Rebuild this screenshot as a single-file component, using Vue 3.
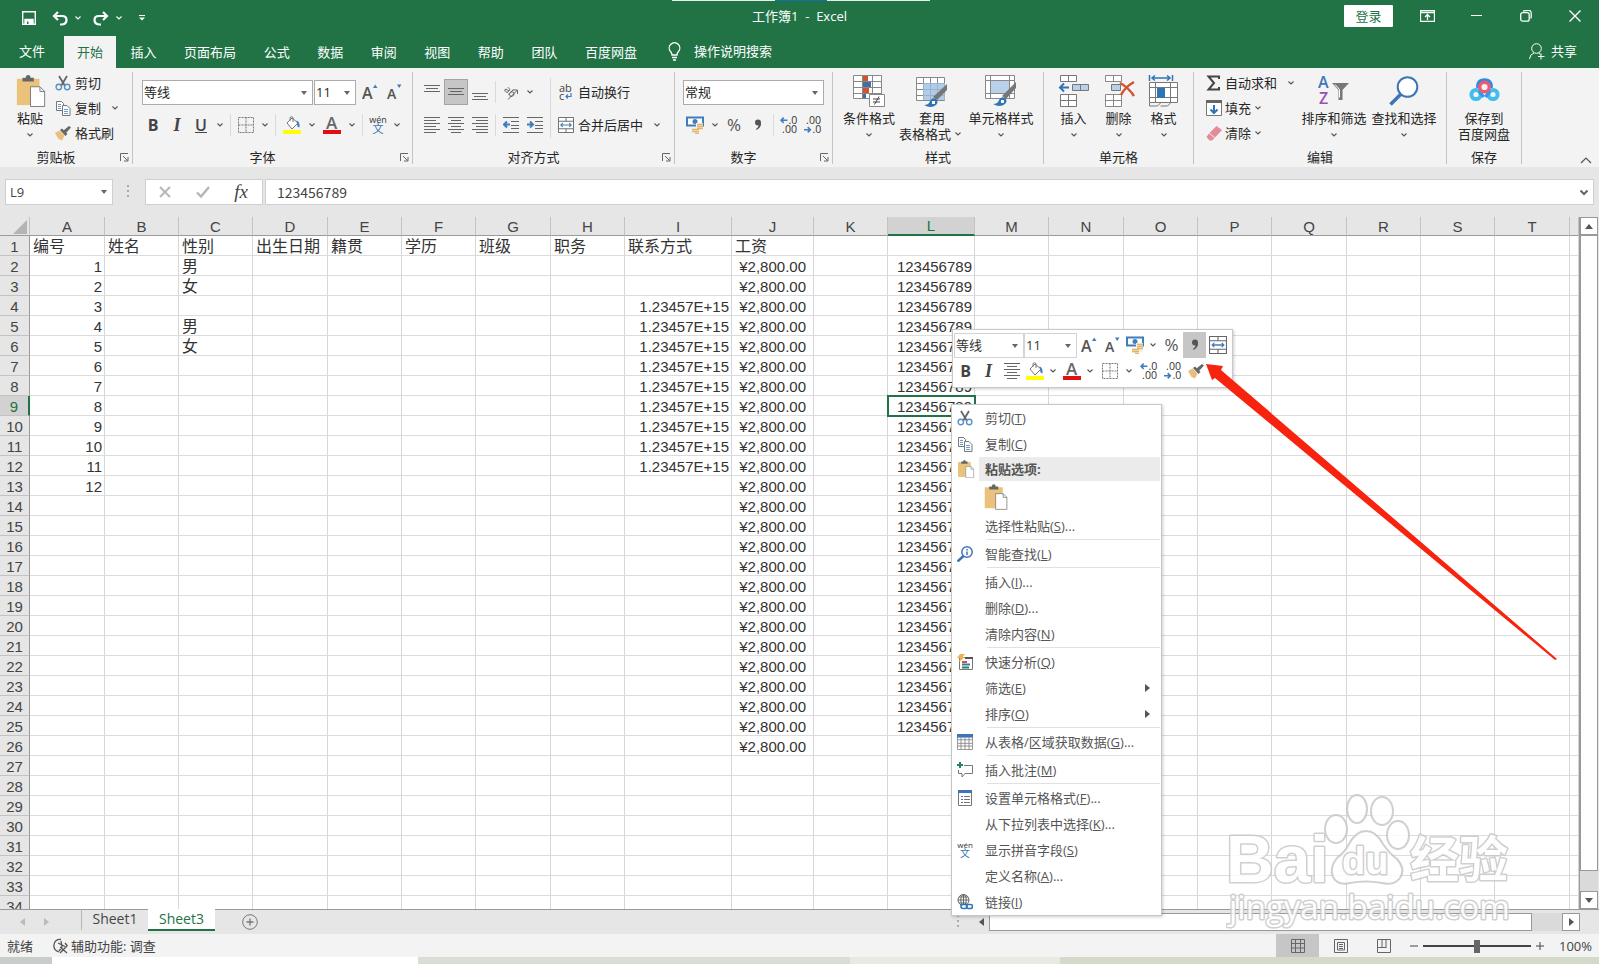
<template>
  <div class="app">
    <svg class="defs" aria-hidden="true">
      <symbol id="i-chev" viewBox="0 0 8 8"><path d="M1.5 2.5 4 5l2.5-2.5" fill="none" stroke="currentColor" stroke-width="1.1" /></symbol>
      <symbol id="i-cut" viewBox="0 0 16 16">
        <path d="M4 1l6 10M12 1L6 11" stroke="#666" stroke-width="1.8" fill="none" />
        <circle cx="3.8" cy="12" r="2.7" fill="none" stroke="#5b8fc7" stroke-width="1.4" />
        <circle cx="12.2" cy="12" r="2.7" fill="none" stroke="#5b8fc7" stroke-width="1.4" />
      </symbol>
      <symbol id="i-copy" viewBox="0 0 16 16">
        <path d="M1.500 1.500h5l2 2v7h-7z" fill="#fff" stroke="#777" />
        <path d="M7.500 5.500h4.500l3 3v7h-7.500z" fill="#fff" stroke="#777" />
        <path d="M3 4.500h3M3 6.500h3M3 8.500h3M9 9.500h4M9 11.500h4M9 13.500h4" stroke="#6a9bd0" />
      </symbol>
      <symbol id="i-brush" viewBox="0 0 16 16">
        <path d="M0 8l4.500-2.500 5 5L7 15.500 3.500 14z" fill="#eabf7d" />
        <path d="M5 5l2-1.500 5.500 5.500-2 2z" fill="#666" />
        <path d="M8.500 5.500L14 1l2 1.500L11 8z" fill="#666" />
      </symbol>
      <symbol id="i-paste" viewBox="0 0 32 34">
        <path d="M1 4h24v28H1z" fill="#eac27c" />
        <path d="M7 3h3.500q0-3 2.500-3t2.500 3H19v4H7z" fill="#666" />
        <path d="M15.500 12.500h10l5 5v16h-15z" fill="#fff" stroke="#777" />
        <path d="M25.500 12.500v5h5" fill="none" stroke="#777" />
      </symbol>
      <symbol id="i-grow" viewBox="0 0 16 16"><text x="0" y="15" font-size="16" font-weight="600" font-family="Open Sans" fill="#555">A</text><path d="M11 4l2.200-3.500L15.500 4z" fill="#3f7dbd" /></symbol>
      <symbol id="i-shrink" viewBox="0 0 16 16"><text x="1" y="15" font-size="14" font-weight="600" font-family="Open Sans" fill="#555">A</text><path d="M11 0.500l2.200 3.500L15.500 0.500z" fill="#3f7dbd" /></symbol>
      <symbol id="i-border" viewBox="0 0 16 16"><path d="M.5.5h15v15H.5zM8 .5v15M.5 8h15" fill="none" stroke="#777" stroke-dasharray="2 1" /></symbol>
      <symbol id="i-bucket" viewBox="0 0 18 18">
        <path d="M4 7l5-5 6 5-6 6z" fill="#fff" stroke="#777" />
        <path d="M7 5V1.500q1.500-1.500 3 0V6" fill="none" stroke="#777" />
        <path d="M13.500 4.500q3.500 1 3 7l-2-1z" fill="#3f7dbd" />
        <path d="M0 14h18v4H0z" fill="#ff0" />
      </symbol>
      <symbol id="i-color" viewBox="0 0 18 18"><text x="3" y="13" font-size="17" font-weight="600" font-family="Open Sans" fill="#666">A</text><path d="M0 14h18v4H0z" fill="#e01010" /></symbol>
      <symbol id="i-wen" viewBox="0 0 18 18"><text x="9" y="7" text-anchor="middle" font-size="9" font-family="Open Sans" fill="#333">wén</text><text x="9" y="17" text-anchor="middle" font-size="11" font-family="Noto Sans CJK SC" fill="#2f75b5">文</text></symbol>
      <symbol id="i-top" viewBox="0 0 16 16"><path d="M0 1.500h16M2 4.500h12M0 7.500h16" stroke="#666" /></symbol>
      <symbol id="i-mid" viewBox="0 0 16 16"><path d="M0 4.500h16M2 7.500h12M0 10.500h16" stroke="#666" /></symbol>
      <symbol id="i-bot" viewBox="0 0 16 16"><path d="M0 9.500h16M2 12.500h12M0 15.500h16" stroke="#666" /></symbol>
      <symbol id="i-left" viewBox="0 0 16 16"><path d="M0 .5h16M0 3.500h12M0 6.500h16M0 9.500h12M0 12.500h16M0 15.500h12" stroke="#666" /></symbol>
      <symbol id="i-center" viewBox="0 0 16 16"><path d="M0 .5h16M3 3.500h10M0 6.500h16M3 9.500h10M0 12.500h16M3 15.500h10" stroke="#666" /></symbol>
      <symbol id="i-right" viewBox="0 0 16 16"><path d="M0 .5h16M4 3.500h12M0 6.500h16M4 9.500h12M0 12.500h16M4 15.500h12" stroke="#666" /></symbol>
      <symbol id="i-outdent" viewBox="0 0 16 16"><path d="M0 .5h16M8 4.500h8M8 8.500h8M8 11.500h8M0 15.500h16" stroke="#666" /><path d="M7 7.500H1M4 4.500l-3 3 3 3" fill="none" stroke="#3f7dbd" stroke-width="2" /></symbol>
      <symbol id="i-indent" viewBox="0 0 16 16"><path d="M0 .5h16M8 4.500h8M8 8.500h8M8 11.500h8M0 15.500h16" stroke="#666" /><path d="M0 7.500h6M3 4.500l3 3-3 3" fill="none" stroke="#3f7dbd" stroke-width="2" /></symbol>
      <symbol id="i-orient" viewBox="0 0 16 16"><text x="0" y="9" font-size="10" font-family="Open Sans" fill="#555" transform="rotate(45 4 8)">ab</text><path d="M5 15.500L14.500 6M10.500 6h4v4" fill="none" stroke="#666" /></symbol>
      <symbol id="i-wrap" viewBox="0 0 16 16"><text x="1" y="8" font-size="11" font-family="Open Sans" fill="#444">ab</text><text x="1" y="16" font-size="11" font-family="Open Sans" fill="#444">c</text><path d="M13 9v3.500H8M10 10.500l-2 2 2 2" fill="none" stroke="#3f7dbd" stroke-width="1.2" /></symbol>
      <symbol id="i-merge" viewBox="0 0 17 17"><path d="M.5.5h16v16H.5zM.5 4.500h16M.5 12.500h16M8.500.5v4M8.500 12.500v4" fill="#fff" stroke="#666" /><path d="M3 8.500h11M5 6.500l-2 2 2 2M12 6.500l2 2-2 2" fill="none" stroke="#3f7dbd" stroke-width="1.200" /></symbol>
      <symbol id="i-money" viewBox="0 0 18 18">
        <path d="M1 1.500h16v8H1z" fill="#fff" stroke="#3f7dbd" stroke-width="2" />
        <circle cx="9" cy="5.500" r="2.500" fill="#3f7dbd" />
        <path d="M10 7h7v9h-7zM6 12h6v5H6z" fill="#f2f2f2" />
        <path d="M11 8.500h6M11 10.500h6M11 12.500h6M6 13.500h7M6 15.500h7M9 17.500h4" stroke="#e2b567" stroke-width="1.400" />
      </symbol>
      <symbol id="i-comma" viewBox="0 0 10 14"><circle cx="5" cy="4.500" r="3" fill="#555" /><path d="M8 4.500q.5 5-4.500 7.500l-.5-1q3-2 2.500-4z" fill="#555" /></symbol>
      <symbol id="i-inc" viewBox="0 0 17 17"><path d="M7 4H1M3.500 1.500L1 4l2.500 2.500" fill="none" stroke="#3f7dbd" stroke-width="1.500" /><text x="8" y="8" font-size="10" font-family="Open Sans" fill="#333">.0</text><text x="2" y="16" font-size="10" font-family="Open Sans" fill="#333">.00</text></symbol>
      <symbol id="i-dec" viewBox="0 0 17 17"><path d="M0 13h6M3.500 10.500L6 13l-2.500 2.500" fill="none" stroke="#3f7dbd" stroke-width="1.500" /><text x="2" y="8" font-size="10" font-family="Open Sans" fill="#333">.00</text><text x="8" y="16" font-size="10" font-family="Open Sans" fill="#333">.0</text></symbol>
      <symbol id="i-cond" viewBox="0 0 32 32">
        <path d="M.5.500h28v23h-28zM.5 6.500h28M.5 12.500h28M.5 18.500h28M9.500.5v23M19.500.5v23" fill="#fff" stroke="#888" />
        <path d="M10 1h5v5h-5zM10 13h6v5h-6z" fill="#d35230" /><path d="M10 7h8v5h-8zM10 19h3v4h-3z" fill="#3f6fa8" />
        <path d="M16.500 19.500h15v12h-15z" fill="#fff" stroke="#888" /><path d="M20 24h7M20 27h7M26 21.500l-4.500 8" stroke="#444" />
      </symbol>
      <symbol id="i-tfmt" viewBox="0 0 32 32">
        <path d="M.5 2.500h28v23h-28zM.5 8.500h28M.5 14.500h28M.5 20.500h28M7.500 2.500v23M14.500 2.500v23M21.500 2.500v23" fill="#fff" stroke="#888" />
        <path d="M7 8h22v17H7z" fill="#9dbfe2" opacity=".8" /><path d="M31 9v6L21 25l-4-3z" fill="#777" />
        <path d="M8 30q5 0 6-4 2-4 6-2 3 3 0 6-5 4-12 0z" fill="#2e75b6" /><path d="M16 26h3v3h-3z" fill="#fff" />
      </symbol>
      <symbol id="i-cstyle" viewBox="0 0 32 32">
        <path d="M.5.500h29v23h-29zM.5 5.500h29M.5 18.500h29M5.500.5v23M24.500.5v23" fill="#fff" stroke="#888" />
        <path d="M6 6h18v12H6z" fill="#b9d0ea" /><path d="M31 7v6L21 24l-4-3z" fill="#777" />
        <path d="M8 29q5 0 6-4 2-4 6-2 3 3 0 6-5 4-12 0z" fill="#2e75b6" /><path d="M16 25h3v3h-3z" fill="#fff" />
      </symbol>
      <symbol id="i-insert" viewBox="0 0 32 32">
        <path d="M2.500.5h16v6h-16zM10.500.5v6M2.500 19.500h16v12h-16zM10.500 19.500v12M2.500 25.500h16" fill="#fff" stroke="#777" />
        <path d="M14.500 9.500h16v6h-16zM22.500 9.500v6" fill="#b9d0ea" stroke="#777" />
        <path d="M11 12.500H2M6 8.500l-4 4 4 4" fill="none" stroke="#2e75b6" stroke-width="2" />
      </symbol>
      <symbol id="i-delete" viewBox="0 0 32 32">
        <path d="M2.500.5h16v6h-16zM10.500.5v6M2.500 19.500h16v12h-16zM10.500 19.500v12M2.500 25.500h16" fill="#fff" stroke="#888" />
        <path d="M8.500 9.500h9v6h-9z" fill="#b9d0ea" stroke="#777" />
        <path d="M17 8q8 4 14 13M31 7q-9 5-13 13" fill="none" stroke="#d35230" stroke-width="2.500" />
      </symbol>
      <symbol id="i-format" viewBox="0 0 32 32">
        <path d="M1.500 0v6M24.500 0v6M4 3h18M7 .5L4 3l3 2.500M19 .5l3 2.500-3 2.500" fill="none" stroke="#2e75b6" stroke-width="1.500" />
        <path d="M1.500 7.500h28v20h-28zM7.500 7.500v20M22.500 7.500v20M1.500 12.500h28M1.500 22.500h28" fill="#fff" stroke="#777" />
        <path d="M9 13h8v10H9z" fill="#2e75b6" /><path d="M1.500 28v3h8l3-3M12.500 31h7l3-3" fill="none" stroke="#777" />
      </symbol>
      <symbol id="i-sum" viewBox="0 0 16 16"><path d="M13 4V1.500H2.500L8 8l-5.500 6.500H13V12" fill="none" stroke="#444" stroke-width="2" /></symbol>
      <symbol id="i-fill" viewBox="0 0 16 16"><path d="M.5.5h15v15H.5z" fill="#fff" stroke="#777" /><path d="M0 0h16v3H0z" fill="#666" /><path d="M8 5v8M4.500 9.500L8 13l3.500-3.500" fill="none" stroke="#2e75b6" stroke-width="2" /></symbol>
      <symbol id="i-erase" viewBox="0 0 16 16"><path d="M10.500 1L16 5 9 12.500 3.500 8z" fill="#e58a99" /><path d="M3 8.500L8.500 13 6 15.500H3.500L.5 12z" fill="#e58a99" /></symbol>
      <symbol id="i-sort" viewBox="0 0 32 32"><text x="0" y="13" font-size="16" font-weight="600" font-family="Open Sans" fill="#3f74b5">A</text><text x="1" y="29" font-size="16" font-weight="600" font-family="Open Sans" fill="#9b4fb5">Z</text><path d="M14 8h17l-6.500 7v10H20.500V15z" fill="#777" /><path d="M17 9.500l4.500 5v8" fill="none" stroke="#fff" /></symbol>
      <symbol id="i-find" viewBox="0 0 32 32"><circle cx="19.500" cy="12" r="9.800" fill="#fff" stroke="#3f74b5" stroke-width="2" /><path d="M12.500 19.500L2.500 29.500" stroke="#3f74b5" stroke-width="3.500" /></symbol>
      <symbol id="i-pan" viewBox="0 0 32 32">
        <path d="M10 13q-1-8 6.500-8t6.500 8" fill="none" stroke="#2b8be6" stroke-width="3.500" />
        <circle cx="8" cy="19.500" r="4.600" fill="none" stroke="#42bdf0" stroke-width="4" />
        <circle cx="25" cy="19.500" r="4.600" fill="none" stroke="#42bdf0" stroke-width="4" />
        <path d="M11 16l4.500 6M22 16l-4.500 6" stroke="#2f9bea" stroke-width="3.500" />
        <circle cx="16.500" cy="12" r="4.800" fill="#f3f3f3" stroke="#ee5a70" stroke-width="3.400" />
      </symbol>
      <symbol id="i-launch" viewBox="0 0 9 9"><path d="M.5 8V.5H8M3 3l4.500 4.500M8 4v4H4" fill="none" stroke="#666" /></symbol>
      <symbol id="i-lookup" viewBox="0 0 16 16"><circle cx="10" cy="6" r="5.200" fill="#fff" stroke="#3f74b5" stroke-width="1.500" /><path d="M6.500 10L.5 15.500" stroke="#3f74b5" stroke-width="2.500" /><path d="M10 5.500v3.500M10 3v1.500" stroke="#3f74b5" stroke-width="1.500" /></symbol>
      <symbol id="i-quick" viewBox="0 0 16 16"><path d="M2.500 3.500h13v12h-13z" fill="#fff" stroke="#777" /><path d="M8 3h8v2H8z" fill="#555" /><path d="M5 8h5" stroke="#d35230" stroke-width="2" /><path d="M5 10.500h8" stroke="#3f74b5" stroke-width="2" /><path d="M5 13.500h7" stroke="#21865a" stroke-width="2" /><path d="M3 0h5L5.500 3H8L2 8l1-4H0z" fill="#f0b04e" /></symbol>
      <symbol id="i-table" viewBox="0 0 18 18"><path d="M.5 1.500h17v16H.5zM.5 6.500h17M.5 10.500h17M.5 13.500h17M4.500 4v13M9 4v13M13.500 4v13" fill="#fff" stroke="#888" /><path d="M0 0h18v4H0z" fill="#3f74b5" /></symbol>
      <symbol id="i-note" viewBox="0 0 16 16"><path d="M7 3.500h8.500v8H8L5 15v-3.500H1.500V8" fill="none" stroke="#777" /><path d="M3 0v6M0 3h6" stroke="#21865a" stroke-width="2" /></symbol>
      <symbol id="i-cellfmt" viewBox="0 0 16 16"><path d="M1.500.5h13v15h-13z" fill="#fff" stroke="#777" /><path d="M1 0h14v3H1z" fill="#3f74b5" /><path d="M4 6.500h2M4 9.500h2M4 12.500h2" stroke="#3f74b5" /><path d="M7 6.500h6M7 9.500h6M7 12.500h6" stroke="#777" /></symbol>
      <symbol id="i-link" viewBox="0 0 16 16"><circle cx="6.500" cy="6" r="5.500" fill="none" stroke="#666" /><path d="M1 6h11M6.500.5v11M2 3h9M2 9h8" stroke="#666" fill="none" /><ellipse cx="6.500" cy="6" rx="2.700" ry="5.500" fill="none" stroke="#666" /><rect x="4" y="10.500" width="6" height="4" rx="2" fill="#fff" stroke="#2e75b6" stroke-width="1.600" /><rect x="9.500" y="10.500" width="6" height="4" rx="2" fill="none" stroke="#2e75b6" stroke-width="1.600" /></symbol>
    </svg>

    <header class="titlebar">
      <div class="quick">
        <button aria-label="保存"><svg width="14" height="14" viewBox="0 0 14 14"><path d="M.7.700h12.600v12.600H.7zM3 8.500h8v4.500H3z" fill="none" stroke="#fff" stroke-width="1.400" /><path d="M3 9h8v4H3z" fill="#fff" /><path d="M5 10.500h1.500V13H5z" fill="#217346" /></svg></button>
        <button aria-label="撤消"><svg width="16" height="15" viewBox="0 0 16 15"><path d="M6 1L2 5l4 4M2 5h8q4.500 0 4.500 4T10 13.500H8" fill="none" stroke="#fff" stroke-width="2.200" /></svg></button>
        <svg class="chev"><use href="#i-chev" /></svg>
        <button aria-label="恢复"><svg width="16" height="15" viewBox="0 0 16 15"><path d="M10 1l4 4-4 4M14 5H6Q1.500 5 1.500 9T6 13.500h2" fill="none" stroke="#fff" stroke-width="2.200" /></svg></button>
        <svg class="chev"><use href="#i-chev" /></svg>
        <button aria-label="自定义"><svg width="6" height="6" viewBox="0 0 6 6"><path d="M0 .5h6" stroke="#fff" /><path d="M0 2.500h6L3 5.500z" fill="#fff" /></svg></button>
      </div>
      <div class="behind"><i></i></div>
      <h1 class="doc-title">工作簿1&nbsp; -&nbsp; Excel</h1>
      <div class="win">
        <button class="login">登录</button>
        <button class="wbtn" aria-label="功能区显示选项"><svg width="15" height="12" viewBox="0 0 15 12"><path d="M.5.500h14v11H.5zM.5 2.500h14M7.500 10V5M5 7l2.500-2.500L10 7" fill="none" stroke="#fff" stroke-width="1.300" /></svg></button>
        <button class="wbtn" aria-label="最小化"><svg width="11" height="12" viewBox="0 0 11 12"><path d="M0 5.500h11" stroke="#fff" /></svg></button>
        <button class="wbtn" aria-label="还原"><svg width="12" height="12" viewBox="0 0 12 12"><rect x=".7" y="2.700" width="8.500" height="8.500" rx="2" fill="none" stroke="#fff" stroke-width="1.300" /><path d="M3 1q6.500-1 7.500 0 1.200 1 .5 7.500" fill="none" stroke="#fff" stroke-width="1.300" /></svg></button>
        <button class="wbtn" aria-label="关闭"><svg width="12" height="12" viewBox="0 0 12 12"><path d="M.5.500l11 11M11.500.5l-11 11" stroke="#fff" stroke-width="1.400" /></svg></button>
      </div>
    </header>

    <nav class="tabs">
      <button class="file">文件</button>
      <div class="tab-list">
        <button v-for="tab in tabs" :key="tab" :class="{ active: tab === activeTab }" @click="activeTab = tab">{{ tab }}</button>
      </div>
      <button class="tell">
        <svg width="13" height="20" viewBox="0 0 13 20"><path d="M4 14q0-2-1.500-3.500A5.300 5.300 0 1 1 10.500 10.500Q9 12 9 14zM4 16.500h5M5 19h3" fill="none" stroke="#fff" stroke-width="1.300" /></svg>
        操作说明搜索
      </button>
      <button class="share">
        <svg width="16" height="17" viewBox="0 0 16 17"><circle cx="7.500" cy="5.500" r="4.800" fill="none" stroke="#fff" /><path d="M.5 16q.5-5 4.500-6M9.500 10l2 1.500M12 10.500v6M9 13.500h6.500" fill="none" stroke="#fff" /></svg>
        共享
      </button>
    </nav>

    <section class="ribbon">
      <div class="group g-clip">
        <div class="body">
          <button class="big paste">
            <svg width="32" height="34"><use href="#i-paste" /></svg>
            <span>粘贴</span>
            <svg class="chev"><use href="#i-chev" /></svg>
          </button>
          <div class="stack">
            <button class="small"><svg><use href="#i-cut" /></svg>剪切</button>
            <button class="small"><svg><use href="#i-copy" /></svg>复制<svg class="chev far"><use href="#i-chev" /></svg></button>
            <button class="small"><svg><use href="#i-brush" /></svg>格式刷</button>
          </div>
        </div>
        <footer><span>剪贴板</span><button aria-label="剪贴板设置"><svg><use href="#i-launch" /></svg></button></footer>
      </div>

      <div class="group g-font">
        <div class="body col">
          <div class="line">
            <span class="drop font-name"><select v-model="font" aria-label="字体"><option>等线</option><option>宋体</option></select></span>
            <span class="drop font-size"><select v-model="size" aria-label="字号"><option>11</option><option>12</option></select></span>
            <button class="ib" aria-label="增大字号"><svg class="s16"><use href="#i-grow" /></svg></button>
            <button class="ib" aria-label="减小字号"><svg class="s16"><use href="#i-shrink" /></svg></button>
          </div>
          <div class="line">
            <button class="ib letter"><b>B</b></button>
            <button class="ib letter it"><i>I</i></button>
            <button class="ib letter under"><u>U</u></button>
            <svg class="chev"><use href="#i-chev" /></svg>
            <i class="vsep"></i>
            <button class="ib" aria-label="边框"><svg class="s16"><use href="#i-border" /></svg></button>
            <svg class="chev"><use href="#i-chev" /></svg>
            <i class="vsep"></i>
            <button class="ib wide" aria-label="填充颜色"><svg class="s18"><use href="#i-bucket" /></svg></button>
            <svg class="chev"><use href="#i-chev" /></svg>
            <button class="ib wide" aria-label="字体颜色"><svg class="s18"><use href="#i-color" /></svg></button>
            <svg class="chev"><use href="#i-chev" /></svg>
            <i class="vsep"></i>
            <button class="ib" aria-label="拼音"><svg class="s18"><use href="#i-wen" /></svg></button>
            <svg class="chev"><use href="#i-chev" /></svg>
          </div>
        </div>
        <footer><span>字体</span><button aria-label="字体设置"><svg><use href="#i-launch" /></svg></button></footer>
      </div>

      <div class="group g-align">
        <div class="body">
          <div class="col">
            <div class="line">
              <button class="ib" aria-label="顶端对齐"><svg class="s16"><use href="#i-top" /></svg></button>
              <button class="ib on" aria-label="垂直居中"><svg class="s16"><use href="#i-mid" /></svg></button>
              <button class="ib" aria-label="底端对齐"><svg class="s16"><use href="#i-bot" /></svg></button>
              <i class="vsep"></i>
              <button class="ib" aria-label="方向"><svg class="s16"><use href="#i-orient" /></svg></button>
              <svg class="chev"><use href="#i-chev" /></svg>
            </div>
            <div class="line">
              <button class="ib" aria-label="左对齐"><svg class="s16"><use href="#i-left" /></svg></button>
              <button class="ib" aria-label="居中"><svg class="s16"><use href="#i-center" /></svg></button>
              <button class="ib" aria-label="右对齐"><svg class="s16"><use href="#i-right" /></svg></button>
              <i class="vsep"></i>
              <button class="ib" aria-label="减少缩进"><svg class="s16"><use href="#i-outdent" /></svg></button>
              <button class="ib" aria-label="增加缩进"><svg class="s16"><use href="#i-indent" /></svg></button>
            </div>
          </div>
          <i class="vsep tall"></i>
          <div class="col">
            <button class="line lbl"><svg class="s16"><use href="#i-wrap" /></svg>自动换行</button>
            <button class="line lbl"><svg class="s16"><use href="#i-merge" /></svg>合并后居中<svg class="chev far"><use href="#i-chev" /></svg></button>
          </div>
        </div>
        <footer><span>对齐方式</span><button aria-label="对齐设置"><svg><use href="#i-launch" /></svg></button></footer>
      </div>

      <div class="group g-num">
        <div class="body col">
          <div class="line">
            <span class="drop num-fmt"><select v-model="format" aria-label="数字格式"><option>常规</option><option>货币</option></select></span>
          </div>
          <div class="line">
            <button class="ib wide" aria-label="会计格式"><svg class="s18"><use href="#i-money" /></svg></button>
            <svg class="chev"><use href="#i-chev" /></svg>
            <button class="ib pct">%</button>
            <button class="ib" aria-label="千位分隔"><svg class="s14"><use href="#i-comma" /></svg></button>
            <i class="vsep"></i>
            <button class="ib" aria-label="增加小数位"><svg class="s18"><use href="#i-inc" /></svg></button>
            <button class="ib" aria-label="减少小数位"><svg class="s18"><use href="#i-dec" /></svg></button>
          </div>
        </div>
        <footer><span>数字</span><button aria-label="数字设置"><svg><use href="#i-launch" /></svg></button></footer>
      </div>

      <div class="group g-style">
        <div class="body">
          <button class="big w58"><svg><use href="#i-cond" /></svg><span>条件格式</span><svg class="chev"><use href="#i-chev" /></svg></button>
          <button class="big w68"><svg><use href="#i-tfmt" /></svg><span>套用</span><span>表格格式<svg class="chev"><use href="#i-chev" /></svg></span></button>
          <button class="big w70"><svg><use href="#i-cstyle" /></svg><span>单元格样式</span><svg class="chev"><use href="#i-chev" /></svg></button>
        </div>
        <footer><span>样式</span></footer>
      </div>

      <div class="group g-cell">
        <div class="body">
          <button class="big w45"><svg><use href="#i-insert" /></svg><span>插入</span><svg class="chev"><use href="#i-chev" /></svg></button>
          <button class="big w45"><svg><use href="#i-delete" /></svg><span>删除</span><svg class="chev"><use href="#i-chev" /></svg></button>
          <button class="big w45"><svg><use href="#i-format" /></svg><span>格式</span><svg class="chev"><use href="#i-chev" /></svg></button>
        </div>
        <footer><span>单元格</span></footer>
      </div>

      <div class="group g-edit">
        <div class="body">
          <div class="stack">
            <button class="small"><svg><use href="#i-sum" /></svg>自动求和<svg class="chev far"><use href="#i-chev" /></svg></button>
            <button class="small"><svg><use href="#i-fill" /></svg>填充<svg class="chev"><use href="#i-chev" /></svg></button>
            <button class="small"><svg><use href="#i-erase" /></svg>清除<svg class="chev"><use href="#i-chev" /></svg></button>
          </div>
          <button class="big w70"><svg><use href="#i-sort" /></svg><span>排序和筛选</span><svg class="chev"><use href="#i-chev" /></svg></button>
          <button class="big w70"><svg><use href="#i-find" /></svg><span>查找和选择</span><svg class="chev"><use href="#i-chev" /></svg></button>
        </div>
        <footer><span>编辑</span></footer>
      </div>

      <div class="group g-save">
        <div class="body">
          <button class="big w74"><svg><use href="#i-pan" /></svg><span>保存到</span><span>百度网盘</span></button>
        </div>
        <footer><span>保存</span></footer>
      </div>

      <button class="collapse" aria-label="折叠功能区"><svg width="12" height="7" viewBox="0 0 12 7"><path d="M1 6l5-5 5 5" fill="none" stroke="#555" stroke-width="1.200" /></svg></button>
    </section>

    <section class="formula">
      <span class="drop name-box"><input v-model="cellName" aria-label="名称框"></span>
      <i class="dots"></i>
      <div class="fx">
        <button aria-label="取消"><svg width="12" height="12" viewBox="0 0 12 12"><path d="M1 1l10 10M11 1L1 11" stroke="#b5b5b5" stroke-width="1.800" /></svg></button>
        <button aria-label="输入"><svg width="14" height="12" viewBox="0 0 14 12"><path d="M1 6.500L5 10.500 13 1" fill="none" stroke="#b5b5b5" stroke-width="2.400" /></svg></button>
        <button class="fx-letter"><i>fx</i></button>
      </div>
      <div class="value">
        <input v-model="cellValue" aria-label="编辑栏">
        <svg width="8" height="7" viewBox="0 0 8 7"><path d="M.5 1.500L4 5l3.500-3.500" fill="none" stroke="#666" stroke-width="2" /></svg>
      </div>
    </section>

    <main class="sheet-area">
      <div class="sheet">
        <table>
          <colgroup>
            <col class="c-head">
            <col v-for="col in columns" :key="col.name" :style="{ width: col.width + 'px' }">
            <col>
          </colgroup>
          <thead>
            <tr>
              <th class="corner"><svg width="14" height="14" viewBox="0 0 14 14"><path d="M14 0v14H0z" fill="#b4b4b4" /></svg></th>
              <th v-for="col in columns" :key="col.name" :class="{ sel: col.name === 'L' }">{{ col.name }}</th>
              <th></th>
            </tr>
          </thead>
          <tbody>
            <tr v-for="row in 34" :key="row">
              <th :class="{ sel: row === 9 }">{{ row }}</th>
              <td v-for="col in columns" :key="col.name" :class="cellClass(col.name, row)">{{ cellText(col.name, row) }}</td>
              <td></td>
            </tr>
          </tbody>
        </table>
      </div>
      <div class="vscroll">
        <button aria-label="向上"><i class="tri up"></i></button>
        <div class="vthumb"></div>
        <div class="vtrack"></div>
        <button aria-label="向下"><i class="tri down"></i></button>
      </div>
    </main>

    <section class="sheetbar">
      <button class="nav-btn" aria-label="上一个"><i class="tri left"></i></button>
      <button class="nav-btn" aria-label="下一个"><i class="tri right"></i></button>
      <button class="sheet-tab first">Sheet1</button>
      <button class="sheet-tab active">Sheet3</button>
      <button class="add" aria-label="新工作表"><svg width="16" height="16" viewBox="0 0 16 16"><circle cx="8" cy="8" r="7.300" fill="none" stroke="#777" /><path d="M8 4.500v7M4.500 8h7" stroke="#777" stroke-width="1.300" /></svg></button>
      <div class="hscroll">
        <i class="dots"></i>
        <button aria-label="向左"><i class="tri left"></i></button>
        <div class="hthumb"></div>
        <div class="htrack"></div>
        <button class="boxed" aria-label="向右"><i class="tri right"></i></button>
      </div>
    </section>

    <footer class="status">
      <span>就绪</span>
      <button class="access">
        <svg width="16" height="16" viewBox="0 0 16 16"><path d="M8 1.500Q2 1 1 6.500T6 14M5 5l7 3.500M8 3l1 6-3 4M7 9l7 6M14 8l-7 7M12 5l2.500 3" fill="none" stroke="#555" stroke-width="1.300" /></svg>
        辅助功能: 调查
      </button>
      <div class="views">
        <button class="on" aria-label="普通"><svg width="14" height="14" viewBox="0 0 14 14"><path d="M.5.500h13v13H.5zM.5 4.500h13M.5 9h13M4.500.5v13M9.500.5v13" fill="none" stroke="#666" /></svg></button>
        <button aria-label="页面布局"><svg width="14" height="14" viewBox="0 0 14 14"><path d="M.5.500h13v13H.5zM3.500 3.500h7v7.500h-7zM5 5.500h4M5 7.500h4M5 9.500h4" fill="none" stroke="#666" /></svg></button>
        <button aria-label="分页预览"><svg width="14" height="14" viewBox="0 0 14 14"><path d="M.5.500h13v13H.5zM5 .5v8h-4.500M9 .5v8M5 8.500h4.500" fill="none" stroke="#666" /></svg></button>
      </div>
      <button class="zoom-btn" aria-label="缩小"><svg width="10" height="10" viewBox="0 0 10 10"><path d="M1 5h8" stroke="#444" /></svg></button>
      <input v-model="zoom" class="zoom" type="range" min="0" max="200" aria-label="缩放">
      <button class="zoom-btn" aria-label="放大"><svg width="10" height="10" viewBox="0 0 10 10"><path d="M1 5h8M5 1v8" stroke="#444" /></svg></button>
      <span class="pct-text">{{ zoom }}%</span>
    </footer>
    <div class="desktop"></div>

    <svg class="watermark" width="300" height="140" viewBox="0 0 300 140">
      <g class="wm-shape">
        <ellipse cx="131" cy="20" rx="10" ry="14" />
        <ellipse cx="156" cy="22" rx="11" ry="14" />
        <ellipse cx="110" cy="40" rx="11" ry="14" />
        <ellipse cx="172" cy="46" rx="11" ry="14" />
        <path d="M140 42q10 0 17 13 6 9 14 15 9 10 3 19-6 8-18 5-16-3-32 0-12 3-17-6-4-9 4-19 8-6 12-14 7-13 17-13z" />
      </g>
      <text class="wm-big" x="0" y="93">Bai</text>
      <text class="wm-du" x="116" y="85">du</text>
      <text class="wm-cn" x="184" y="88">经验</text>
      <text class="wm-url" x="3" y="130">jingyan.baidu.com</text>
    </svg>

    <div class="mini">
      <div class="line">
        <span class="drop mini-font"><select v-model="font" aria-label="字体"><option>等线</option><option>宋体</option></select></span>
        <span class="drop mini-size"><select v-model="size" aria-label="字号"><option>11</option><option>12</option></select></span>
        <button class="ib" aria-label="增大字号"><svg class="s16"><use href="#i-grow" /></svg></button>
        <button class="ib" aria-label="减小字号"><svg class="s16"><use href="#i-shrink" /></svg></button>
        <button class="ib" aria-label="会计格式"><svg class="s18"><use href="#i-money" /></svg></button>
        <svg class="chev"><use href="#i-chev" /></svg>
        <button class="ib pct">%</button>
        <button class="ib flat-on" aria-label="千位分隔"><svg class="s14"><use href="#i-comma" /></svg></button>
        <button class="ib" aria-label="合并后居中"><svg class="s18"><use href="#i-merge" /></svg></button>
      </div>
      <div class="line">
        <button class="ib letter"><b>B</b></button>
        <button class="ib letter it"><i>I</i></button>
        <button class="ib" aria-label="居中"><svg class="s16"><use href="#i-center" /></svg></button>
        <button class="ib" aria-label="填充颜色"><svg class="s18"><use href="#i-bucket" /></svg></button>
        <svg class="chev"><use href="#i-chev" /></svg>
        <button class="ib" aria-label="字体颜色"><svg class="s18"><use href="#i-color" /></svg></button>
        <svg class="chev"><use href="#i-chev" /></svg>
        <button class="ib wide" aria-label="边框"><svg class="s16"><use href="#i-border" /></svg></button>
        <svg class="chev"><use href="#i-chev" /></svg>
        <button class="ib wide" aria-label="增加小数位"><svg class="s18"><use href="#i-inc" /></svg></button>
        <button class="ib" aria-label="减少小数位"><svg class="s18"><use href="#i-dec" /></svg></button>
        <button class="ib" aria-label="格式刷"><svg class="s16"><use href="#i-brush" /></svg></button>
      </div>
    </div>

    <div class="menu" role="menu">
      <template v-for="(item, i) in menuItems" :key="i">
        <hr v-if="item.sep">
        <div v-else-if="item.header" class="menu-header">
          <svg class="s18"><use href="#i-paste" /></svg><strong>{{ item.text }}</strong>
        </div>
        <button v-else-if="item.paste" class="paste-opt" aria-label="粘贴"><svg><use href="#i-paste" /></svg></button>
        <button v-else class="menu-item" role="menuitem">
          <span class="menu-icon"><svg v-if="item.icon" class="s16"><use :href="'#i-' + item.icon" /></svg></span>
          <span>{{ item.text }}(<u>{{ item.key }}</u>){{ item.more ? '...' : '' }}</span>
          <i v-if="item.sub" class="tri right"></i>
        </button>
      </template>
    </div>

    <svg class="arrow" width="354" height="300" viewBox="0 0 354 300">
      <path d="M1 2L18 4 16 8 352 297 350 298 10 16 7 18z" fill="#f8230f" />
    </svg>
  </div>
</template>

<script setup>
import { ref } from 'vue'

const tabs = ['开始', '插入', '页面布局', '公式', '数据', '审阅', '视图', '帮助', '团队', '百度网盘']
const activeTab = ref('开始')
const font = ref('等线')
const size = ref('11')
const format = ref('常规')
const cellName = ref('L9')
const cellValue = ref('123456789')
const zoom = ref(100)

const widths = [75, 74, 74, 75, 74, 74, 75, 74, 107, 82, 74, 87, 74, 75, 74, 74, 75, 74, 74, 75]
const columns = widths.map((width, i) => ({ name: String.fromCharCode(65 + i), width }))

const headings = {
  A: '编号', B: '姓名', C: '性别', D: '出生日期', E: '籍贯',
  F: '学历', G: '班级', H: '职务', I: '联系方式', J: '工资'
}
const genders = { 2: '男', 3: '女', 5: '男', 6: '女' }

function cellText(col, row) {
  if (row === 1) return headings[col] || ''
  if (col === 'A' && row <= 13) return row - 1
  if (col === 'C') return genders[row] || ''
  if (col === 'I' && row >= 4 && row <= 12) return '1.23457E+15'
  if (col === 'J' && row <= 26) return '¥2,800.00'
  if (col === 'L' && row <= 25) return '123456789'
  return ''
}

function cellClass(col, row) {
  return {
    text: row === 1 || col === 'C',
    money: col === 'J' && row > 1,
    current: col === 'L' && row === 9
  }
}

const menuItems = [
  { icon: 'cut', text: '剪切', key: 'T' },
  { icon: 'copy', text: '复制', key: 'C' },
  { header: true, text: '粘贴选项:' },
  { paste: true },
  { text: '选择性粘贴', key: 'S', more: true },
  { sep: true },
  { icon: 'lookup', text: '智能查找', key: 'L' },
  { sep: true },
  { text: '插入', key: 'I', more: true },
  { text: '删除', key: 'D', more: true },
  { text: '清除内容', key: 'N' },
  { sep: true },
  { icon: 'quick', text: '快速分析', key: 'Q' },
  { text: '筛选', key: 'E', sub: true },
  { text: '排序', key: 'O', sub: true },
  { sep: true },
  { icon: 'table', text: '从表格/区域获取数据', key: 'G', more: true },
  { sep: true },
  { icon: 'note', text: '插入批注', key: 'M' },
  { sep: true },
  { icon: 'cellfmt', text: '设置单元格格式', key: 'F', more: true },
  { text: '从下拉列表中选择', key: 'K', more: true },
  { icon: 'wen', text: '显示拼音字段', key: 'S' },
  { text: '定义名称', key: 'A', more: true },
  { icon: 'link', text: '链接', key: 'I' }
]
</script>

<style>
body {
  margin: 0;
  overflow: hidden;
}
</style>

<style scoped>
.app {
  position: relative;
  display: flex;
  flex-direction: column;
  height: 100vh;
  overflow: hidden;
  background: #e6e6e6;
  color: #333;
  font: 13px/16px "Open Sans", "Noto Sans CJK SC", sans-serif;
}

.app * {
  box-sizing: border-box;
}

button, input, select {
  font: inherit;
  color: inherit;
  border: 0;
  margin: 0;
  padding: 0;
  background: none;
}

button {
  display: flex;
  align-items: center;
  justify-content: center;
  white-space: nowrap;
  flex-shrink: 0;
}

svg {
  flex-shrink: 0;
}

.defs {
  display: none;
}

.s14 { width: 14px; height: 14px; }
.s16 { width: 16px; height: 16px; }
.s18 { width: 18px; height: 18px; }

svg.chev {
  width: 14px;
  height: 8px;
  color: #555;
}

/* title bar */
.titlebar {
  position: relative;
  display: flex;
  align-items: center;
  justify-content: space-between;
  height: 36px;
  flex-shrink: 0;
  background: #217346;
  color: #fff;
}

.quick {
  display: flex;
  align-items: center;
  padding-left: 17px;
}

.quick button {
  width: 24px;
}

.quick button:first-child {
  margin-right: 7px;
}

.quick .chev {
  color: #fff;
  width: 12px;
  margin-right: 5px;
}

.quick button:last-child {
  width: 12px;
  margin-left: 6px;
}

.behind {
  position: absolute;
  left: 42%;
  top: 0;
  width: 258px;
  height: 1px;
  background: #e4efe8;
  display: flex;
  justify-content: center;
}

.behind i {
  width: 52px;
  background: #1272a8;
}

.doc-title {
  position: absolute;
  left: 0;
  right: 0;
  top: 8px;
  margin: 0;
  text-align: center;
  font-size: 13px;
  line-height: 16px;
  font-weight: 400;
}

.win {
  display: flex;
  align-items: center;
}

.login {
  width: 49px;
  height: 22px;
  margin: 0 10px 4px 0;
  background: #fff;
  color: #217346;
  border-radius: 1px;
}

.wbtn {
  width: 49px;
  height: 32px;
  margin-bottom: 4px;
}

/* tabs */
.tabs {
  display: flex;
  height: 32px;
  flex-shrink: 0;
  background: #217346;
  color: #fff;
  padding-right: 22px;
}

.tabs button {
  height: 32px;
  padding-bottom: 2px;
}

.file {
  width: 64px;
}

.tab-list {
  display: flex;
  justify-content: space-between;
  width: 586px;
}

.tab-list button {
  padding: 0 13px;
}

.tab-list .active {
  background: #f3f3f3;
  color: #217346;
}

.tell {
  margin-left: 18px;
  gap: 13px;
}

.share {
  margin-left: auto;
  gap: 6px;
}

/* ribbon */
.ribbon {
  display: flex;
  height: 99px;
  flex-shrink: 0;
  background: #f3f3f3;
  color: #262626;
}

.group {
  display: flex;
  flex-direction: column;
  flex-shrink: 0;
  height: 92px;
  margin-top: 4px;
  border-right: 1px solid #c4c4c4;
}

.g-clip { width: 133px; padding-left: 8px; }
.g-font { width: 280px; padding-left: 8px; }
.g-align { width: 262px; padding-left: 7px; }
.g-num { width: 158px; padding-left: 7px; }
.g-style { width: 211px; padding-left: 7px; }
.g-cell { width: 150px; padding-left: 7px; }
.g-edit { width: 253px; padding-left: 7px; }
.g-save { width: 75px; }

.body {
  display: flex;
  height: 79px;
}

.col {
  display: flex;
  flex-direction: column;
  gap: 7px;
  padding-top: 7px;
}

.line {
  display: flex;
  align-items: center;
  height: 26px;
}

.group footer {
  display: flex;
  align-items: center;
  height: 14px;
}

.group footer span {
  flex: 1;
  text-align: center;
}

.group footer button {
  width: 16px;
  margin-left: 4px;
}

.group footer svg {
  width: 9px;
  height: 9px;
}

.g-clip footer, .g-font footer { margin-left: -8px; }
.g-align footer, .g-num footer, .g-style footer, .g-cell footer, .g-edit footer { margin-left: -7px; }

.big {
  flex-direction: column;
  justify-content: flex-start;
  padding-top: 3px;
}

.big > svg:first-child {
  width: 32px;
  height: 32px;
  margin-bottom: 3px;
}

.big.paste > svg:first-child {
  margin-left: 2px;
}

.big > span {
  display: flex;
  align-items: center;
  height: 16px;
}

.big > .chev {
  margin-top: 5px;
}

.paste { width: 44px; }
.w45 { width: 45px; }
.w58 { width: 58px; }
.w68 { width: 68px; }
.w70 { width: 70px; }
.w74 { width: 74px; }

.stack {
  display: flex;
  flex-direction: column;
  margin-top: -2px;
}

.g-edit .stack {
  width: 98px;
}

.small {
  justify-content: flex-start;
  height: 25px;
  padding-left: 3px;
}

.small > svg:first-child {
  width: 16px;
  height: 16px;
  margin-right: 4px;
}

.g-edit .small {
  padding-left: 5px;
}

.g-edit .small > svg:first-child {
  margin-right: 3px;
}

.far {
  margin-left: 7px;
}

.ib {
  width: 24px;
  height: 26px;
}

.ib.wide {
  width: 26px;
}

.ib.on {
  background: #c6c6c6;
  border: 1px solid #a5a5a5;
}

.ib.flat-on {
  background: #c6c6c6;
}

.letter {
  font-size: 16px;
  color: #444;
}

.under {
  font-weight: 600;
}

.it {
  font-family: "Liberation Serif", serif;
  font-size: 18px;
  font-weight: 700;
}

.pct {
  font-size: 17px;
  color: #555;
}

.vsep {
  width: 1px;
  height: 22px;
  margin: 0 3px;
  background: #dadada;
}

.vsep.tall {
  height: 60px;
  margin-top: 6px;
}

.lbl svg:first-child {
  margin: 0 4px;
}

.lbl {
  justify-content: flex-start;
}

.drop {
  position: relative;
  display: flex;
  background: #fff;
  border: 1px solid #ababab;
}

.drop::after {
  content: "";
  position: absolute;
  right: 5px;
  top: 10px;
  border: 3px solid transparent;
  border-top: 4px solid #666;
  border-bottom: 0;
}

.drop select, .drop input {
  appearance: none;
  width: 100%;
  height: 23px;
  padding-left: 1px;
  outline: 0;
}

.font-name { width: 171px; margin: 0 1px; }
.font-size { width: 42px; margin-right: 2px; }
.num-fmt { width: 141px; margin-left: 1px; }

.collapse {
  margin: 86px 7px 0 auto;
  height: 12px;
}

/* formula bar */
.formula {
  display: flex;
  height: 50px;
  flex-shrink: 0;
  padding: 12px 5px;
  color: #444;
}

.name-box {
  width: 108px;
  border-color: #cfcfcf;
}

.name-box input {
  height: 24px;
  padding-left: 4px;
}

.dots {
  width: 2px;
  height: 13px;
  background: repeating-linear-gradient(#aaa 0 2px, transparent 2px 5px);
}

.formula .dots {
  margin: 6px 16px 0 14px;
}

.fx {
  display: flex;
  width: 118px;
  background: #fff;
  border: 1px solid #cfcfcf;
}

.fx button {
  width: 38px;
}

.fx-letter {
  font: 400 19px/20px "Liberation Serif", serif;
  color: #444;
}

.value {
  display: flex;
  align-items: center;
  flex: 1;
  margin-left: 2px;
  padding: 0 5px 0 11px;
  background: #fff;
  border: 1px solid #cfcfcf;
}

.value input {
  flex: 1;
  font: 14px/20px "Noto Sans CJK SC", sans-serif;
  outline: 0;
}

/* sheet */
.sheet-area {
  display: flex;
  flex: 1;
  min-height: 0;
  border-bottom: 1px solid #999;
}

.sheet {
  flex: 1;
  min-width: 0;
  overflow: hidden;
  background: #fff;
  border-right: 1px solid #999;
}

table {
  width: 100%;
  table-layout: fixed;
  border-collapse: separate;
  border-spacing: 0;
  font: 15px/16px "Liberation Sans", "Noto Sans CJK SC", sans-serif;
  color: #333;
}

.c-head {
  width: 30px;
}

th, td {
  height: 20px;
  padding: 3px 2px 0 3px;
  overflow: hidden;
  white-space: nowrap;
  font-weight: 400;
  border-right: 1px solid #d6d6d6;
  border-bottom: 1px solid #dcdcdc;
}

th {
  padding: 3px 0 0;
  background: #e6e6e6;
  color: #444;
  text-align: center;
  border-color: #c3c3c3;
}

thead th {
  height: 19px;
  padding-top: 2px;
  border-bottom-color: #9b9b9b;
}

tbody th {
  border-right-color: #9b9b9b;
}

.corner {
  padding-top: 1px;
}

.corner svg {
  display: block;
  margin-left: 13px;
}

td {
  text-align: right;
}

.text {
  text-align: left;
  font-size: 16px;
}

.money {
  padding-right: 7px;
}

.current {
  outline: 2px solid #217346;
  outline-offset: -1px;
}

th.sel {
  background: #d2d2d2;
  color: #217346;
}

thead th.sel {
  border-bottom: 2px solid #217346;
  padding-top: 1px;
}

tbody th.sel {
  border-right: 2px solid #217346;
}

.tri {
  border: 4px solid transparent;
}

.up { border-bottom: 5px solid #555; border-top: 0; }
.down { border-top: 5px solid #555; border-bottom: 0; }
.left { border-right: 5px solid #555; border-left: 0; }
.right { border-left: 5px solid #555; border-right: 0; }

.vscroll {
  display: flex;
  flex-direction: column;
  width: 19px;
  padding-right: 1px;
}

.vscroll button, .boxed {
  height: 18px;
  background: #fff;
  border: 1px solid #999;
}

.vthumb {
  flex: 1;
  background: #fff;
  border: 1px solid #999;
}

.vtrack {
  height: 20px;
  background: #dadada;
}

/* sheet tabs */
.sheetbar {
  display: flex;
  height: 24px;
  flex-shrink: 0;
  padding-left: 10px;
}

.nav-btn {
  width: 24px;
  height: 24px;
}

.nav-btn .left { border-right-color: #bbb; }
.nav-btn .right { border-left-color: #bbb; }

.sheet-tab {
  width: 67px;
  height: 22px;
  margin-top: -1px;
  font-size: 14px;
  color: #444;
  border-bottom: 2px solid transparent;
}

.first {
  margin-left: 23px;
  border-left: 1px solid #b5b5b5;
}

.sheet-tab.active {
  background: #fff;
  color: #217346;
  border-bottom-color: #217346;
}

.add {
  width: 70px;
  height: 24px;
}

.hscroll {
  display: flex;
  align-items: center;
  width: 623px;
  height: 19px;
  margin: 2px 19px 0 auto;
}

.hscroll .dots {
  margin-right: 14px;
}

.hscroll button {
  width: 16px;
}

.hscroll .boxed {
  width: 18px;
}

.hthumb {
  flex: 1;
  height: 18px;
  background: #fff;
  border: 1px solid #999;
}

.htrack {
  width: 30px;
  height: 18px;
  background: #dadada;
}

/* status bar */
.status {
  display: flex;
  align-items: center;
  height: 23px;
  flex-shrink: 0;
  padding: 0 7px;
  background: #f3f3f3;
  color: #444;
}

.access {
  margin-left: 20px;
  gap: 2px;
}

.views {
  display: flex;
  margin-left: auto;
}

.views button {
  width: 43px;
  height: 23px;
}

.views .on {
  background: #c6c6c6;
}

.zoom-btn {
  width: 18px;
}

.zoom {
  appearance: none;
  width: 108px;
  height: 14px;
}

.zoom::-webkit-slider-runnable-track {
  height: 2px;
  background: #444;
}

.zoom::-webkit-slider-thumb {
  appearance: none;
  width: 6px;
  height: 13px;
  margin-top: -5px;
  background: #666;
}

.pct-text {
  width: 43px;
  text-align: right;
}

.desktop {
  height: 7px;
  flex-shrink: 0;
  background: linear-gradient(90deg, #c9cdc9 52px, #fff 52px 418px, #d8ddd5 418px 850px, #e6eae2 850px 1060px, #d3dac9 1060px);
}

/* overlays */
.watermark {
  position: absolute;
  left: 1226px;
  top: 789px;
  stroke: #c8c8c8;
  fill: #fff;
  opacity: 0.85;
}

.watermark text {
  stroke-width: 3px;
  stroke-linejoin: round;
  paint-order: stroke;
}

.wm-shape { stroke-width: 2px; }
.wm-big { font: 700 66px "Liberation Sans", sans-serif; }
.wm-du { font: 700 38px "Liberation Sans", sans-serif; }
.wm-cn { font: 700 49px "Noto Sans CJK SC", sans-serif; }
.wm-url { font: 400 33px "Open Sans", sans-serif; }

.mini {
  position: absolute;
  left: 952px;
  top: 329px;
  width: 281px;
  height: 59px;
  padding: 2px 1px;
  background: #fff;
  border: 1px solid #c8c8c8;
  box-shadow: 1px 1px 3px rgba(0, 0, 0, 0.2);
}

.mini .drop {
  border-color: #d4d4d4;
}

.mini .ib {
  width: 23px;
}

.mini .ib.wide {
  width: 25px;
}

.mini-font { width: 70px; }
.mini-size { width: 53px; }

.menu {
  position: absolute;
  left: 951px;
  top: 404px;
  width: 211px;
  padding: 0 1px;
  background: #fff;
  border: 1px solid #c6c6c6;
  box-shadow: 1px 1px 3px rgba(0, 0, 0, 0.2);
  color: #555;
}

.menu hr {
  height: 1px;
  margin: 0 0 1px 34px;
  border: 0;
  background: #e1e1e1;
}

.menu-item {
  width: 100%;
  height: 26px;
  justify-content: flex-start;
}

.menu-icon {
  display: flex;
  width: 29px;
  margin-right: 3px;
  padding-left: 4px;
}

.menu-item .tri {
  margin: 0 10px 0 auto;
}

.menu-header {
  display: flex;
  align-items: center;
  height: 24px;
  padding-left: 4px;
  background: linear-gradient(90deg, #fff 26px, #ebebeb 26px);
}

.menu-header strong {
  margin-left: 10px;
  font-weight: 700;
}

.paste-opt {
  width: 24px;
  height: 32px;
  margin-left: 31px;
}

.paste-opt svg {
  width: 24px;
  height: 26px;
}

.arrow {
  position: absolute;
  left: 1205px;
  top: 362px;
  pointer-events: none;
}
</style>
